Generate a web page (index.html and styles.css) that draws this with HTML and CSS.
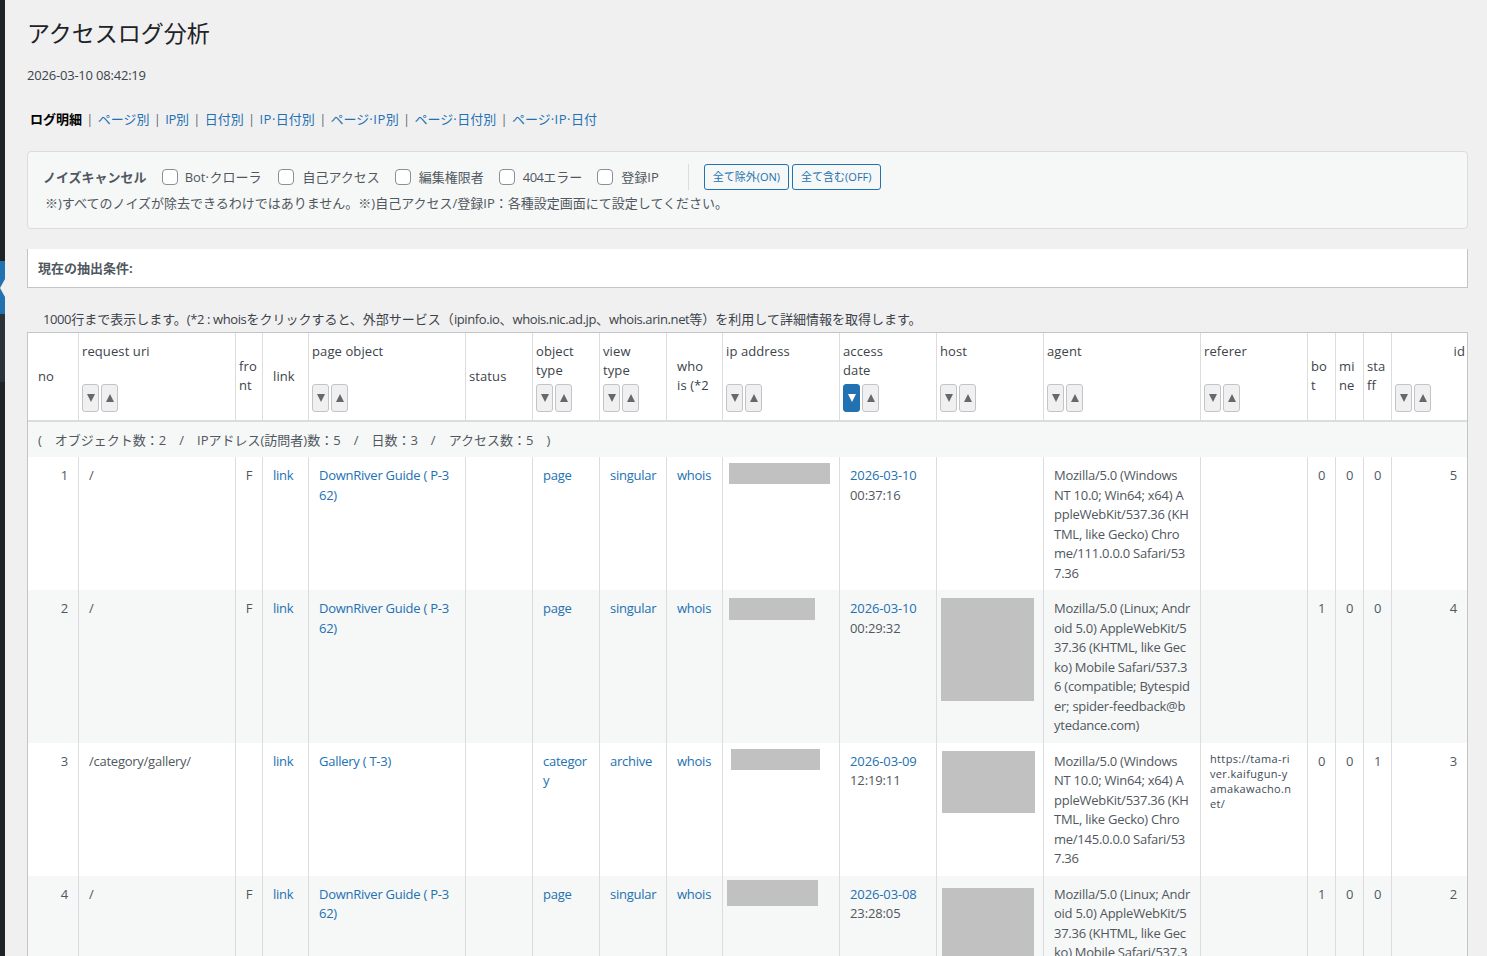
FILE: index.html
```html
<!DOCTYPE html>
<html lang="ja">
<head>
<meta charset="utf-8">
<title>アクセスログ分析</title>
<link rel="stylesheet" href="styles.css">
</head>
<body>
<div class="shell">
  <aside class="adminbar">
    <div class="bar-top"></div>
    <div class="bar-current"><span class="bar-arrow"></span></div>
    <div class="bar-sub"></div>
  </aside>
  <main class="content">
    <h1 class="title">アクセスログ分析</h1>
    <p class="stamp">2026-03-10 08:42:19</p>
    <nav class="tabs">
      <strong class="tab-current">ログ明細</strong><span class="sep">|</span><a href="#">ページ別</a><span class="sep">|</span><a href="#"><span class="lat">IP</span>別</a><span class="sep">|</span><a href="#">日付別</a><span class="sep">|</span><a href="#"><span class="dot">IP·</span>日付別</a><span class="sep">|</span><a href="#">ページ<span class="dot">·IP</span>別</a><span class="sep">|</span><a href="#">ページ<span class="dot">·</span>日付別</a><span class="sep">|</span><a href="#">ページ<span class="dot">·IP·</span>日付</a>
    </nav>
    <section class="noise">
      <div class="noise-row">
        <strong class="noise-title">ノイズキャンセル</strong>
        <label class="check check-bot"><input type="checkbox"><span class="check-text">Bot<span class="dot">·</span>クローラ</span></label>
        <label class="check"><input type="checkbox"><span class="check-text">自己アクセス</span></label>
        <label class="check"><input type="checkbox"><span class="check-text">編集権限者</span></label>
        <label class="check"><input type="checkbox"><span class="check-text"><span class="lat-tight">404</span>エラー</span></label>
        <label class="check"><input type="checkbox"><span class="check-text">登録IP</span></label>
        <span class="divider"></span>
        <button class="btn-outline" type="button">全て除外(ON)</button>
        <button class="btn-outline" type="button">全て含む(OFF)</button>
      </div>
      <p class="noise-note">※)すべてのノイズが除去できるわけではありません。※)自己アクセス/登録IP：各種設定画面にて設定してください。</p>
    </section>
    <section class="conditions"><strong>現在の抽出条件:</strong></section>
    <p class="table-note"><span class="lat">1000</span>行まで表示します。<span class="lat">(*2 : whois</span>をクリックすると、外部サービス（<span class="lat">ipinfo.io</span>、<span class="lat">whois.nic.ad.jp</span>、<span class="lat">whois.arin.net</span>等）を利用して詳細情報を取得します。</p>
    <table class="log">
      <colgroup>
        <col class="c51"><col class="c157"><col class="c27"><col class="c46"><col class="c157"><col class="c67"><col class="c67"><col class="c67"><col class="c56"><col class="c117"><col class="c97"><col class="c107"><col class="c157"><col class="c107"><col class="c28"><col class="c28"><col class="c28"><col class="c75">
      </colgroup>
      <thead>
        <tr>
          <th class="wide">no</th>
          <th><div class="lbl">request uri</div><div class="sort"><button type="button" class="dn" aria-label="desc"></button><button type="button" class="up" aria-label="asc"></button></div></th>
          <th class="pad4">fro<br>nt</th>
          <th class="wide">link</th>
          <th><div class="lbl">page object</div><div class="sort"><button type="button" class="dn" aria-label="desc"></button><button type="button" class="up" aria-label="asc"></button></div></th>
          <th>status</th>
          <th><div class="lbl">object<br>type</div><div class="sort"><button type="button" class="dn" aria-label="desc"></button><button type="button" class="up" aria-label="asc"></button></div></th>
          <th><div class="lbl">view<br>type</div><div class="sort"><button type="button" class="dn" aria-label="desc"></button><button type="button" class="up" aria-label="asc"></button></div></th>
          <th class="wide">who<br>is (*2</th>
          <th><div class="lbl">ip address</div><div class="sort"><button type="button" class="dn" aria-label="desc"></button><button type="button" class="up" aria-label="asc"></button></div></th>
          <th><div class="lbl">access<br>date</div><div class="sort"><button type="button" class="dn on" aria-label="desc"></button><button type="button" class="up" aria-label="asc"></button></div></th>
          <th><div class="lbl">host</div><div class="sort"><button type="button" class="dn" aria-label="desc"></button><button type="button" class="up" aria-label="asc"></button></div></th>
          <th><div class="lbl">agent</div><div class="sort"><button type="button" class="dn" aria-label="desc"></button><button type="button" class="up" aria-label="asc"></button></div></th>
          <th><div class="lbl">referer</div><div class="sort"><button type="button" class="dn" aria-label="desc"></button><button type="button" class="up" aria-label="asc"></button></div></th>
          <th class="pad4">bo<br>t</th>
          <th class="pad4">mi<br>ne</th>
          <th class="pad4">sta<br>ff</th>
          <th><div class="lbl lbl-right">id</div><div class="sort"><button type="button" class="dn" aria-label="desc"></button><button type="button" class="up" aria-label="asc"></button></div></th>
        </tr>
      </thead>
      <tbody>
        <tr class="summary">
          <td colspan="18"><div class="summary-in"><span>(</span><span>オブジェクト数：2</span><span>/</span><span>IPアドレス(訪問者)数：5</span><span>/</span><span>日数：3</span><span>/</span><span>アクセス数：5</span><span>)</span></div></td>
        </tr>
        <tr>
          <td class="r">1</td><td>/</td><td class="m">F</td><td><a href="#">link</a></td>
          <td><a href="#">DownRiver Guide ( P-3<br>62)</a></td><td></td>
          <td><a href="#">page</a></td><td><a href="#">singular</a></td><td class="who"><a href="#">whois</a></td>
          <td class="mask-cell"><span class="mask ip1"></span></td>
          <td class="date"><a href="#">2026-03-10</a><br>00:37:16</td>
          <td></td>
          <td>Mozilla/5.0 (Windows<br>NT 10.0; Win64; x64) A<br>ppleWebKit/537.36 (KH<br>TML, like Gecko) Chro<br>me/111.0.0.0 Safari/53<br>7.36</td>
          <td></td>
          <td class="m">0</td><td class="m">0</td><td class="m">0</td><td class="r">5</td>
        </tr>
        <tr>
          <td class="r">2</td><td>/</td><td class="m">F</td><td><a href="#">link</a></td>
          <td><a href="#">DownRiver Guide ( P-3<br>62)</a></td><td></td>
          <td><a href="#">page</a></td><td><a href="#">singular</a></td><td class="who"><a href="#">whois</a></td>
          <td class="mask-cell"><span class="mask ip2"></span></td>
          <td class="date"><a href="#">2026-03-10</a><br>00:29:32</td>
          <td class="mask-cell"><span class="mask host2"></span></td>
          <td>Mozilla/5.0 (Linux; Andr<br>oid 5.0) AppleWebKit/5<br>37.36 (KHTML, like Gec<br>ko) Mobile Safari/537.3<br>6 (compatible; Bytespid<br>er; spider-feedback@b<br>ytedance.com)</td>
          <td></td>
          <td class="m">1</td><td class="m">0</td><td class="m">0</td><td class="r">4</td>
        </tr>
        <tr>
          <td class="r">3</td><td>/category/gallery/</td><td class="m"></td><td><a href="#">link</a></td>
          <td><a href="#">Gallery ( T-3)</a></td><td></td>
          <td><a href="#">categor<br>y</a></td><td><a href="#">archive</a></td><td class="who"><a href="#">whois</a></td>
          <td class="mask-cell"><span class="mask ip3"></span></td>
          <td class="date"><a href="#">2026-03-09</a><br>12:19:11</td>
          <td class="mask-cell"><span class="mask host3"></span></td>
          <td>Mozilla/5.0 (Windows<br>NT 10.0; Win64; x64) A<br>ppleWebKit/537.36 (KH<br>TML, like Gecko) Chro<br>me/145.0.0.0 Safari/53<br>7.36</td>
          <td class="ref">https://tama-ri<br>ver.kaifugun-y<br>amakawacho.n<br>et/</td>
          <td class="m">0</td><td class="m">0</td><td class="m">1</td><td class="r">3</td>
        </tr>
        <tr>
          <td class="r">4</td><td>/</td><td class="m">F</td><td><a href="#">link</a></td>
          <td><a href="#">DownRiver Guide ( P-3<br>62)</a></td><td></td>
          <td><a href="#">page</a></td><td><a href="#">singular</a></td><td class="who"><a href="#">whois</a></td>
          <td class="mask-cell"><span class="mask ip4"></span></td>
          <td class="date"><a href="#">2026-03-08</a><br>23:28:05</td>
          <td class="mask-cell"><span class="mask host4"></span></td>
          <td>Mozilla/5.0 (Linux; Andr<br>oid 5.0) AppleWebKit/5<br>37.36 (KHTML, like Gec<br>ko) Mobile Safari/537.3<br>6 (compatible; Bytespid<br>er; spider-feedback@b<br>ytedance.com)</td>
          <td></td>
          <td class="m">1</td><td class="m">0</td><td class="m">0</td><td class="r">2</td>
        </tr>
      </tbody>
    </table>
  </main>
</div>
</body>
</html>
```
FILE: styles.css
```css
* { box-sizing: border-box; }
html, body { margin: 0; height: 100%; overflow: hidden; }
body {
  background: #f0f0f1;
  color: #3c434a;
  font-family: "Open Sans", "Noto Sans CJK JP", sans-serif;
  font-size: 13px;
  line-height: 19.5px;
}
a { color: #2271b1; text-decoration: none; }
.lat { letter-spacing: -0.4px; }
.lat-tight { letter-spacing: -0.6px; }
.dot { letter-spacing: 0.5px; }

.shell { display: flex; height: 956px; overflow: hidden; }

.adminbar { width: 5px; flex: none; background: #1d2327; display: flex; flex-direction: column; }
.bar-top { height: 261px; }
.bar-current { height: 53px; background: #2271b1; position: relative; }
.bar-arrow {
  position: absolute; left: 0; top: 18px; width: 0; height: 0;
  border-top: 9px solid transparent;
  border-bottom: 9px solid transparent;
  border-right: 5px solid #f0f0f1;
}
.bar-sub { height: 68px; background: #2c3338; }

.content { flex: 1; min-width: 0; padding: 0 19px 0 22px; }

.title { margin: 0; padding-top: 18px; font-size: 23px; font-weight: 400; line-height: 30px; color: #1d2327; }
.stamp { margin: 18px 0 0; letter-spacing: -0.2px; }
.tabs { margin-top: 24px; padding-left: 3px; display: flex; align-items: center; height: 19.5px; }
.tab-current { color: #000; font-weight: 700; }
.sep { color: #646970; margin: 0 4.3px; }

.noise {
  margin-top: 21.5px; height: 78px; padding: 12px 15px 0;
  background: #f6f7f7; border: 1px solid #dcdcde; border-radius: 4px;
}
.noise-row { display: flex; align-items: center; height: 26px; }
.noise-title { color: #50575e; margin-right: 15px; padding-top: 2px; font-weight: 700; }
.check { display: flex; align-items: center; margin-right: 15px; color: #50575e; }
.check-text { padding-top: 2px; }
.check-bot { margin-right: 17px; }
.check input {
  appearance: none; width: 16px; height: 16px; margin: 0 8px 0 0;
  background: #fff; border: 1px solid #8c8f94; border-radius: 4px;
}
.check-bot input { margin-right: 7px; }
.divider { width: 1px; height: 26px; background: #dcdcde; margin: 0 15px 0 14px; }
.btn-outline {
  height: 26px; padding: 0 8px; margin-right: 3px;
  background: #f6f7f7; color: #2271b1;
  border: 1px solid #2271b1; border-radius: 3px;
  font: inherit; font-size: 11px; line-height: 24px;
}
.noise-note { margin: 4px 0 0 2px; color: #50575e; }

.conditions {
  margin-top: 20px; height: 39px; padding: 10px 10px;
  background: #fff;
  border: 1px solid #c3c4c7; border-top: 0;
  color: #50575e;
}
.table-note { margin: 22px 0 0; padding-left: 16px; height: 22.5px; }

.log {
  table-layout: fixed; width: 1441px;
  border-collapse: separate; border-spacing: 0;
  border: 1px solid #c3c4c7;
  background: #fff;
  color: #50575e;
}
.c51 { width: 51px; } .c157 { width: 157px; } .c27 { width: 27px; }
.c46 { width: 46px; } .c67 { width: 67px; } .c56 { width: 56px; }
.c117 { width: 117px; } .c97 { width: 97px; } .c107 { width: 107px; }
.c28 { width: 28px; } .c75 { width: 75px; }

.log th, .log td { border-right: 1px solid #dcdcde; white-space: nowrap; overflow: hidden; }
.log th:last-child, .log td:last-child { border-right: 0; }

.log th {
  padding: 8px 0 8px 3px; font-weight: 400; text-align: left; vertical-align: middle;
  color: #3c434a; border-bottom: 2px solid #dcdcde; letter-spacing: 0.1px;
}
.log th.wide { padding-left: 10px; }
.log th.pad4 { padding-left: 3px; }
.lbl { height: 39px; padding-top: 0.5px; }
.lbl-right { text-align: right; padding-right: 2px; }
.sort { display: flex; gap: 2px; margin-top: 3.5px; height: 28px; }
.sort button {
  width: 17px; height: 28px; padding: 0;
  background: #f0f0f1;
  border: 1px solid #c3c4c7; border-radius: 3px;
  display: flex; align-items: center; justify-content: center;
}
.sort button::before {
  content: ""; width: 0; height: 0;
  border-left: 4.5px solid transparent;
  border-right: 4.5px solid transparent;
}
.sort .dn::before { border-top: 8px solid #646970; }
.sort .up::before { border-bottom: 8px solid #646970; }
.sort button.on { background: #2271b1; border-color: #2271b1; }
.sort button.on::before { border-top-color: #fff; }

.log td { padding: 9px 0 7px 10px; vertical-align: top; letter-spacing: -0.25px; }
.log tbody tr:nth-child(even) td { background: #fff; }
.log tbody tr:nth-child(odd) td { background: #f6f7f7; }
.log td.r { text-align: right; padding: 9px 10px 7px 0; }
.log td.m { text-align: center; padding: 9px 0 7px; }
.log .who { padding-left: 10px; }
.log td.date { letter-spacing: -0.12px; }

.log .summary td { border-right: 0; padding: 9px 10px 7px; letter-spacing: 0; }
.summary-in { display: flex; gap: 13px; }

.log td.ref { font-size: 11px; line-height: 15px; letter-spacing: 0.35px; padding: 8px 0 8px 9px; color: #3c4a55; }

.mask-cell { position: relative; }
.mask { position: absolute; display: block; background: #c1c1c1; }
.ip1 { left: 6px; top: 6px; width: 101px; height: 21px; }
.ip2 { left: 6px; top: 8px; width: 86px; height: 22px; }
.ip3 { left: 8px; top: 6px; width: 89px; height: 21px; }
.ip4 { left: 4px; top: 4px; width: 91px; height: 26px; }
.host2 { left: 4px; top: 8px; width: 93px; height: 103px; }
.host3 { left: 5px; top: 8px; width: 93px; height: 62px; }
.host4 { left: 5px; top: 12px; width: 92px; height: 100px; }
```
